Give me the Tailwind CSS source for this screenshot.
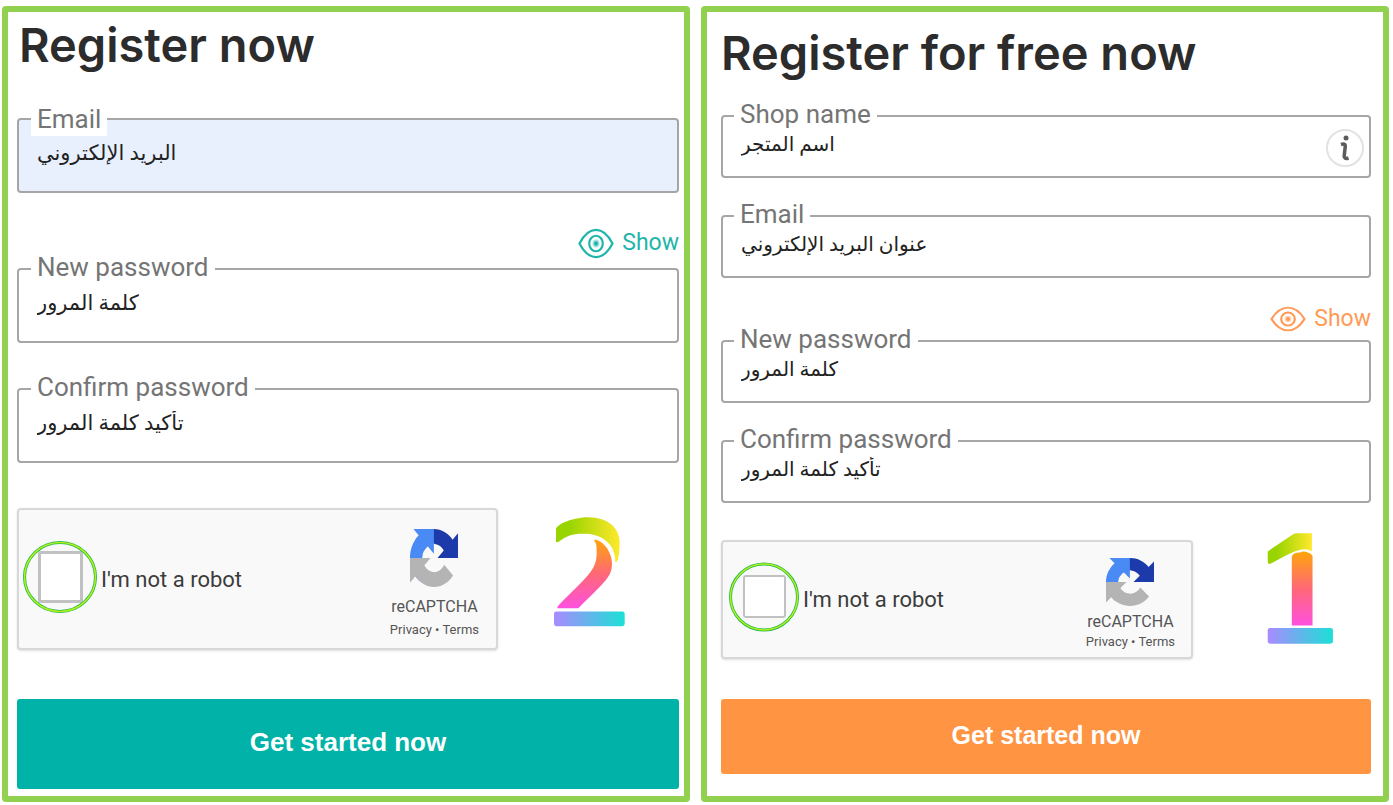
<!DOCTYPE html>
<html lang="en">
<head>
  <meta charset="UTF-8" />
  <meta name="viewport" content="width=device-width, initial-scale=1.0"/>
  <title>Register now</title>
  <!-- Tailwind CSS CDN -->
  <script src="https://cdn.jsdelivr.net/npm/@tailwindcss/browser@4"></script>
</head>
<body class="bg-white font-['Roboto','DejaVu_Sans',sans-serif]">
  <!-- Shared icon shapes -->
  <svg class="hidden" aria-hidden="true">
    <symbol id="recaptcha" viewBox="0 0 64 64" preserveAspectRatio="none">
      <path fill="#1c3aa9" d="M64 31.955l-.033-1.37V4.687l-7.16 7.16C50.948 4.674 42.033.093 32.05.093c-10.4 0-19.622 4.96-25.458 12.64l11.736 11.86a15.55 15.55 0 0 1 4.754-5.334c2.05-1.6 4.952-2.906 8.968-2.906.485 0 .86.057 1.135.163 4.976.393 9.288 3.14 11.828 7.124l-8.307 8.307L64 31.953"/>
      <path fill="#4a8af4" d="M31.862.094l-1.37.033H4.594l7.16 7.16C4.58 13.147 0 22.06 0 32.046c0 10.4 4.96 19.622 12.64 25.458L24.5 45.768a15.55 15.55 0 0 1-5.334-4.754c-1.6-2.05-2.906-4.952-2.906-8.968 0-.485.057-.86.163-1.135.393-4.976 3.14-9.288 7.124-11.828l8.307 8.307L31.86.095"/>
      <path fill="#b4b4b4" d="M.001 32.045l.033 1.37v25.898l7.16-7.16c5.86 7.173 14.774 11.754 24.76 11.754 10.4 0 19.622-4.96 25.458-12.64l-11.736-11.86a15.55 15.55 0 0 1-4.754 5.334c-2.05 1.6-4.952 2.906-8.968 2.906-.485 0-.86-.057-1.135-.163-4.976-.393-9.288-3.14-11.828-7.124l8.307-8.307c-10.522.04-22.4.066-27.295-.005"/>
    </symbol>
    <symbol id="eye" viewBox="0 0 36 32" preserveAspectRatio="none">
      <g fill="none" stroke="currentColor" stroke-width="2.200">
        <path d="M1.500 16C6 7 11.500 2 18 2s12 5 16.500 14C30 25 24.500 30 18 30S6 25 1.500 16z"/>
        <ellipse cx="18" cy="16" rx="6.800" ry="8"/>
      </g>
      <ellipse cx="18" cy="16" rx="3.500" ry="4.200" fill="currentColor" fill-opacity=".4"/>
      <ellipse cx="18" cy="16" rx="2" ry="2.400" fill="currentColor"/>
    </symbol>
  </svg>

  <main class="grid grid-cols-2 gap-[11px] pt-[6px] pr-1 pb-[3px] pl-[2px]">
    <!-- Step 2 -->
    <section class="rounded-[4px] border-6 border-[#92d050] pt-2 pr-[5px] pb-[7px] pl-[9px]">
      <h1 class="pl-[2px] font-['Inter',sans-serif] text-[47px] leading-[50px] font-semibold text-[#2c2c2c]">Register now</h1>
      <form class="mt-12">
        <div class="relative">
          <label for="email2" class="absolute -top-4 left-[14px] bg-white px-[6px] text-[26px] leading-[34px] text-[#757575]">Email</label>
          <input id="email2" type="email" placeholder="البريد الإلكتروني" class="block h-[75px] w-full rounded-[4px] border-2 border-[#a6a6a6] bg-[#e8f0fe] px-[18px] pb-[5px] text-[21px] text-[#222] placeholder:text-[#222]">
        </div>
        <div class="mt-8 flex h-9 justify-end">
          <button type="button" class="flex items-center gap-2 text-[23px] leading-[36px] text-[#1fb5aa]">
            <svg class="h-[31px] w-[36px]"><use href="#eye"/></svg>
            Show
          </button>
        </div>
        <div class="relative mt-[7px]">
          <label for="pass2" class="absolute -top-[18px] left-[14px] bg-white px-[6px] text-[26px] leading-[34px] text-[#757575]">New password</label>
          <input id="pass2" type="password" placeholder="كلمة المرور" class="block h-[75px] w-full rounded-[4px] border-2 border-[#a6a6a6] px-[18px] pb-[5px] text-[21px] text-[#222] placeholder:text-[#222]">
        </div>
        <div class="relative mt-[45px]">
          <label for="confirm2" class="absolute -top-[18px] left-[14px] bg-white px-[6px] text-[26px] leading-[34px] text-[#757575]">Confirm password</label>
          <input id="confirm2" type="password" placeholder="تأكيد كلمة المرور" class="block h-[75px] w-full rounded-[4px] border-2 border-[#a6a6a6] px-[18px] pb-[5px] text-[21px] text-[#222] placeholder:text-[#222]">
        </div>

        <div class="mt-[45px] flex items-start">
          <div class="flex h-[142px] w-[481px] items-center rounded-[4px] border-2 border-[#d8d8d8] bg-[#f9f9f9] pr-[17px] pl-1 shadow-sm">
            <div class="relative mb-1 flex h-[72px] w-[74px] items-center justify-center">
              <input id="robot2" type="checkbox" class="h-[52px] w-[45px] appearance-none rounded-[3px] border-3 border-[#c1c1c1] bg-white">
              <svg class="pointer-events-none absolute inset-0 h-full w-full" viewBox="0 0 74 72" fill="none">
                <ellipse cx="37" cy="36" rx="35.500" ry="34.500" stroke="#1fb84a" stroke-width="3"/>
                <ellipse cx="37" cy="36" rx="35.500" ry="34.500" stroke="#b4f01e" stroke-width="1.500"/>
              </svg>
            </div>
            <label for="robot2" class="pl-1 text-[22px] text-[#3c3c3c]">I'm not a robot</label>
            <div class="ml-auto flex flex-col items-center pt-3 text-[#555]">
              <svg class="h-[58px] w-[48px]"><use href="#recaptcha"/></svg>
              <p class="mt-2 text-[16px] leading-[24px]">reCAPTCHA</p>
              <p class="text-[13px] leading-[22px]"><a href="#">Privacy</a> • <a href="#">Terms</a></p>
            </div>
          </div>
          <!-- Number two -->
          <svg class="mt-2 ml-14 h-[111px] w-[71px]" viewBox="552 48 213 332" role="img" aria-label="2">
            <defs>
              <linearGradient id="twoTop"><stop offset=".2" stop-color="#98d400"/><stop offset="1" stop-color="#ffe92c"/></linearGradient>
              <linearGradient id="stem" x1="0" y1="0" x2="0" y2="1"><stop offset="0" stop-color="#ffa50a"/><stop offset=".5" stop-color="#ff6876"/><stop offset="1" stop-color="#ff50e0"/></linearGradient>
              <linearGradient id="base"><stop offset="0" stop-color="#a98bff"/><stop offset="1" stop-color="#1be0d6"/></linearGradient>
            </defs>
            <path fill="url(#twoTop)" d="M558 124V88C558 72 610 51 655 51C715 51 749 85 749 125C749 150 746 186 738 186C735 186 736 178 735 170C728 125 690 101 640 101C605 101 590 108 566 125Q558 128 558 124Z"/>
            <path fill="url(#stem)" d="M676 118C705 125 726 160 726 190C726 230 705 245 625 324H562Q560 322 566 315C650 230 680 210 680 160C680 140 680 130 672 121Z"/>
            <rect fill="url(#base)" x="552" y="334" width="212" height="44" rx="7"/>
          </svg>
        </div>

        <button type="submit" class="mt-[49px] block h-[90px] w-full rounded-[3px] bg-[#00b2a7] pb-1 font-['Liberation_Sans',sans-serif] text-[26px] font-bold text-white">Get started now</button>
      </form>
    </section>

    <!-- Step 1 -->
    <section class="rounded-[4px] border-6 border-[#92d050] pt-4 pr-3 pb-[7px] pl-[14px]">
      <h1 class="font-['Inter',sans-serif] text-[47px] leading-[50px] font-semibold text-[#2c2c2c]">Register for free now</h1>
      <form class="mt-[37px]">
        <div class="relative">
          <label for="shop" class="absolute -top-[17px] left-[13px] bg-white px-[6px] text-[26px] leading-[32px] text-[#757575]">Shop name</label>
          <input id="shop" type="text" placeholder="اسم المتجر" class="block h-[63px] w-full rounded-[4px] border-2 border-[#a6a6a6] pr-14 pb-[5px] pl-[18px] text-[20px] text-[#222] placeholder:text-[#222]">
          <button type="button" aria-label="Info" class="absolute top-[14px] right-[7px] flex h-[38px] w-[38px] items-center justify-center rounded-full border-2 border-[#e2e2e2] text-[#5c5c5c]">
            <svg class="h-[26px] w-[12px]" viewBox="0 0 12 26" fill="none">
              <circle cx="7" cy="3" r="2.500" fill="currentColor"/>
              <path d="M2 9.500q4.500-1.500 4.300 1.500L5.200 21q-.2 3.500 4.300 2" stroke="currentColor" stroke-width="3.500"/>
            </svg>
          </button>
        </div>
        <div class="relative mt-[37px]">
          <label for="email1" class="absolute -top-[17px] left-[13px] bg-white px-[6px] text-[26px] leading-[32px] text-[#757575]">Email</label>
          <input id="email1" type="email" placeholder="عنوان البريد الإلكتروني" class="block h-[63px] w-full rounded-[4px] border-2 border-[#a6a6a6] px-[18px] pb-[5px] text-[20px] text-[#222] placeholder:text-[#222]">
        </div>
        <div class="mt-[25px] flex h-8 justify-end">
          <button type="button" class="flex items-center gap-2 text-[23px] leading-[32px] text-[#ff9a57]">
            <svg class="h-[26px] w-[36px]"><use href="#eye"/></svg>
            Show
          </button>
        </div>
        <div class="relative mt-[5px]">
          <label for="pass1" class="absolute -top-[17px] left-[13px] bg-white px-[6px] text-[26px] leading-[32px] text-[#757575]">New password</label>
          <input id="pass1" type="password" placeholder="كلمة المرور" class="block h-[63px] w-full rounded-[4px] border-2 border-[#a6a6a6] px-[18px] pb-[5px] text-[20px] text-[#222] placeholder:text-[#222]">
        </div>
        <div class="relative mt-[37px]">
          <label for="confirm1" class="absolute -top-[17px] left-[13px] bg-white px-[6px] text-[26px] leading-[32px] text-[#757575]">Confirm password</label>
          <input id="confirm1" type="password" placeholder="تأكيد كلمة المرور" class="block h-[63px] w-full rounded-[4px] border-2 border-[#a6a6a6] px-[18px] pb-[5px] text-[20px] text-[#222] placeholder:text-[#222]">
        </div>

        <div class="mt-[37px] flex items-start">
          <div class="flex h-[119px] w-[472px] items-center rounded-[4px] border-2 border-[#d8d8d8] bg-[#f9f9f9] pr-4 pl-[6px] shadow-sm">
            <div class="relative mb-[6px] flex h-[70px] w-[70px] items-center justify-center">
              <input id="robot1" type="checkbox" class="h-[43px] w-[43px] appearance-none rounded-[3px] border-2 border-[#c1c1c1] bg-white">
              <svg class="pointer-events-none absolute inset-0 h-full w-full" viewBox="0 0 70 70" fill="none">
                <ellipse cx="35" cy="35" rx="33.500" ry="33" stroke="#1fb84a" stroke-width="3"/>
                <ellipse cx="35" cy="35" rx="33.500" ry="33" stroke="#b4f01e" stroke-width="1.500"/>
              </svg>
            </div>
            <label for="robot1" class="pl-1 text-[22px] text-[#3c3c3c]">I'm not a robot</label>
            <div class="ml-auto flex flex-col items-center pt-2 text-[#555]">
              <svg class="h-[48px] w-[48px]"><use href="#recaptcha"/></svg>
              <p class="mt-1 text-[16px] leading-[24px]">reCAPTCHA</p>
              <p class="text-[13px] leading-[16px]"><a href="#">Privacy</a> • <a href="#">Terms</a></p>
            </div>
          </div>
          <!-- Number one -->
          <svg class="-mt-[7px] ml-[74px] h-[111px] w-[67px]" viewBox="622 68 200 332" role="img" aria-label="1">
            <path fill="url(#twoTop)" d="M624 128Q622 124 628 120L700 72Q704 69 710 69H756V123Q740 112 715 120Q700 122 632 160Q624 162 624 155Z"/>
            <path fill="url(#stem)" d="M696 345V138Q700 126 720 126Q732 120 744 126Q754 128 758 136V345Z"/>
            <rect fill="url(#base)" x="624" y="352" width="195" height="47" rx="7"/>
          </svg>
        </div>

        <button type="submit" class="mt-10 block h-[75px] w-full rounded-[3px] bg-[#ff9443] pb-[2px] font-['Liberation_Sans',sans-serif] text-[25px] font-bold text-white">Get started now</button>
      </form>
    </section>
  </main>
</body>
</html>
